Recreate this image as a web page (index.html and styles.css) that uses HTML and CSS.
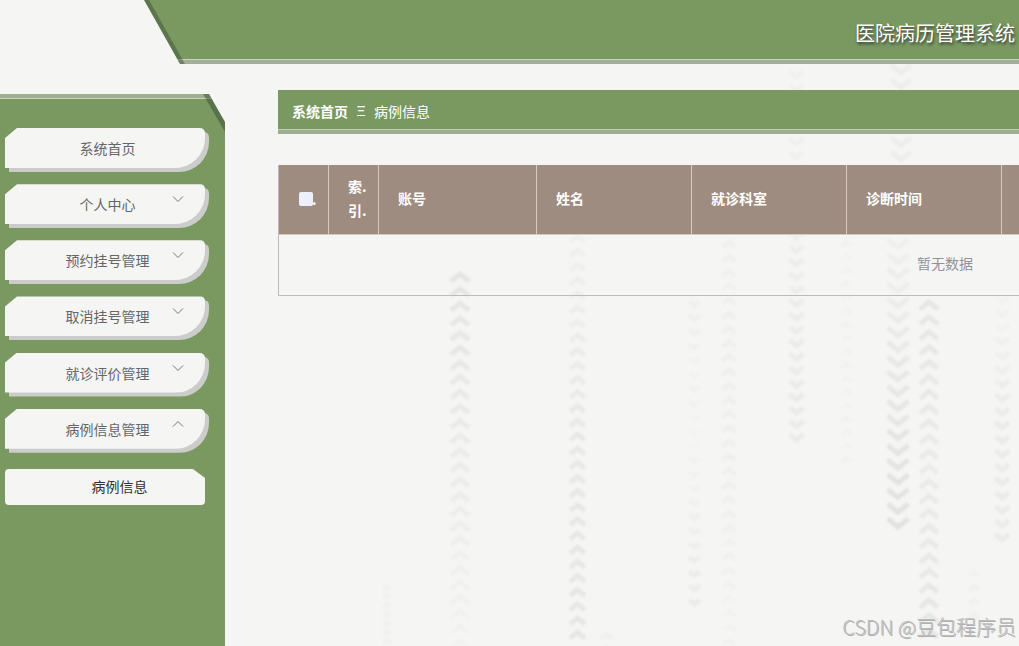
FILE: index.html
```html
<!DOCTYPE html>
<html lang="zh-CN">
<head>
    <meta charset="UTF-8">
    <meta name="viewport" content="width=device-width, initial-scale=1.0">
    <title>医院病历管理系统</title>
    <link rel="stylesheet" href="styles.css">
</head>
<body>
    <svg class="page-bg" id="page-bg" width="1019" height="646" viewBox="0 0 1019 646"></svg>
    <header class="header">
        <h1 class="title">医院病历管理系统</h1>
    </header>
    <div class="container">
        <aside class="sidebar">
            <ul class="menu">
                <li class="menu-item"><a class="menu-link">系统首页</a></li>
                <li class="menu-item"><a class="menu-link">个人中心</a><svg class="arrow" viewBox="0 0 12 8"><path d="M1 1.5l5 5 5-5"/></svg></li>
                <li class="menu-item"><a class="menu-link">预约挂号管理</a><svg class="arrow" viewBox="0 0 12 8"><path d="M1 1.5l5 5 5-5"/></svg></li>
                <li class="menu-item"><a class="menu-link">取消挂号管理</a><svg class="arrow" viewBox="0 0 12 8"><path d="M1 1.5l5 5 5-5"/></svg></li>
                <li class="menu-item"><a class="menu-link">就诊评价管理</a><svg class="arrow" viewBox="0 0 12 8"><path d="M1 1.5l5 5 5-5"/></svg></li>
                <li class="menu-item"><a class="menu-link">病例信息管理</a><svg class="arrow" viewBox="0 0 12 8"><path d="M1 6.5l5-5 5 5"/></svg></li>
            </ul>
            <a class="submenu-link">病例信息</a>
        </aside>
        <main class="main">
            <nav class="breadcrumb">
                <b>系统首页</b>
                <span class="separator">Ξ</span>
                <span>病例信息</span>
            </nav>
            <table class="table">
                <thead>
                    <tr>
                        <th class="col-check"><span class="check-wrap"><span class="checkbox"></span>.</span></th>
                        <th class="col-index">索.<br>引.</th>
                        <th class="col-account">账号</th>
                        <th class="col-info">姓名</th>
                        <th class="col-info">就诊科室</th>
                        <th class="col-info">诊断时间</th>
                        <th></th>
                    </tr>
                </thead>
                <tbody>
                    <tr>
                        <td class="empty" colspan="7">暂无数据</td>
                    </tr>
                </tbody>
            </table>
        </main>
    </div>
    <div class="watermark">CSDN @豆包程序员</div>
    <script>
// x, first y, last y, spacing, width, direction (1 = down), opacity at start / middle / end
const columns = [
  [460, 272, 640, 14.65, 20, -1, 0.065, 0.04, 0.012],
  [577.5, 234, 640, 14.15, 17, -1, 0.02, 0.05, 0.06],
  [694.5, 292, 604, 14.2, 13, 1, 0.025, 0.008, 0.04],
  [729, 240, 640, 14.2, 15, -1, 0.02, 0.025, 0.01],
  [796.5, 64, 440, 13.45, 16, 1, 0.02, 0.03, 0.045],
  [847, 240, 460, 13.5, 13, -1, 0.01, 0.01, 0.01],
  [901, 72, 160, 14.5, 22, 1, 0.03, 0.03, 0.03],
  [898, 238, 527, 14.7, 23, 1, 0.02, 0.055, 0.075],
  [929, 300, 640, 14.9, 20, -1, 0.06, 0.04, 0.06],
  [1002.5, 300, 540, 14, 16, 1, 0.01, 0.04, 0.04],
  [974, 570, 615, 14, 12, -1, 0.012, 0.02, 0.02],
  [387, 584, 644, 9, 11, -1, 0.016, 0.016, 0.016],
  [606, 632, 646, 12, 14, -1, 0.02, 0.02, 0.02]
];

let arrows = '';
columns.forEach(([x, first, last, step, width, dir, a, b, c]) => {
  const w = width / 2 - 1;
  const h = w * 0.8 * dir;
  // columns pointing down are laid out from their lowest arrow
  const count = Math.floor((last - first) / step);
  for (let i = 0; i <= count; i++) {
    const y = dir > 0 ? last - i * step : first + i * step + 2;
    const t = (y - first) / (last - first);
    const opacity = t < 0.5 ? a + (b - a) * t * 2 : b + (c - b) * (t - 0.5) * 2;
    arrows += `<path d="M${x - w} ${y - h}L${x} ${y}L${x + w} ${y - h}" stroke-opacity="${opacity}"/>`;
  }
});
document.getElementById('page-bg').innerHTML = arrows;
    </script>
</body>
</html>
```
FILE: styles.css
```css
* {
  box-sizing: border-box;
}

body {
  margin: 0;
  height: 646px;
  overflow: hidden;
  background: #f5f5f4;
  font-family: "Noto Sans CJK SC", sans-serif;
  font-size: 14px;
  color: #666;
}

/* faint arrows behind the whole page */
.page-bg {
  position: absolute;
  top: 0;
  left: 0;
  z-index: -1;
  fill: none;
  stroke: #000;
  stroke-width: 5;
  filter: blur(1.1px);
}

.header {
  position: relative;
  height: 64px;
  margin-left: 144px;
  padding: 18px 4px 0 0;
  background: #799961;
  border-bottom: 4px solid #a3ae99;
  box-shadow: inset 0 -1px 0 #c9d6bf;
  clip-path: polygon(0 0, 100% 0, 100% 100%, 36px 100%);
}

.header::before {
  content: "";
  position: absolute;
  top: 0;
  left: 0;
  width: 42px;
  height: 64px;
  background: rgba(55, 75, 50, 0.45);
  clip-path: polygon(0 0, 5px 0, 41px 100%, 36px 100%);
}

.title {
  margin: 0;
  font-size: 20px;
  line-height: 30px;
  font-weight: normal;
  text-align: right;
  color: #fff;
  text-shadow: 1px 2px 3px #333;
}

.container {
  display: flex;
  align-items: flex-start;
}

.sidebar {
  position: relative;
  flex: none;
  width: 225px;
  height: 552px;
  margin-top: 30px;
  padding: 30px 20px 0 5px;
  background: #799961;
  border-top: 4px solid #9fb092;
  box-shadow: inset 0 1px 0 #c9d6bf;
  clip-path: polygon(0 0, 209px 0, 100% 28px, 100% 100%, 0 100%);
}

.sidebar::before {
  content: "";
  position: absolute;
  top: -4px;
  right: 0;
  width: 22px;
  height: 38px;
  background: rgba(55, 75, 50, 0.5);
  clip-path: polygon(0 0, 6px 0, 100% 28px, 100% 100%);
}

.menu {
  margin: 0;
  padding: 0;
  list-style: none;
}

.menu-item {
  position: relative;
  width: 204px;
  height: 44px;
  margin-bottom: 12.15px;
}

/* offset grey plate under the button */
.menu-item::before {
  content: "";
  position: absolute;
  top: 4px;
  left: 4px;
  width: 200px;
  height: 40px;
  background: #ccccca;
  border-radius: 0 5px 30px 0;
  clip-path: polygon(12px 0, 100% 0, 100% 100%, 0 100%, 0 10px);
}

.menu-link {
  position: relative;
  display: block;
  width: 200px;
  height: 40px;
  padding-left: 5px;
  line-height: 41px;
  text-align: center;
  background: #f5f5f4;
  border-radius: 0 5px 30px 0;
  clip-path: polygon(12px 0, 100% 0, 100% 100%, 0 100%, 0 10px);
}

.arrow {
  position: absolute;
  top: 11px;
  left: 167px;
  width: 12px;
  height: 8px;
  fill: none;
  stroke: #777;
  stroke-width: 1;
}

.submenu-link {
  display: block;
  width: 200px;
  height: 36px;
  margin-top: 16.25px;
  padding-left: 29px;
  line-height: 35px;
  text-align: center;
  color: #303133;
  background: #f5f5f4;
  border-radius: 4px;
  clip-path: polygon(0 0, 188px 0, 100% 9px, 100% 100%, 0 100%);
}

.main {
  flex: 1;
  min-width: 0;
  padding: 26px 0 0 53px;
  overflow: hidden;
}

.breadcrumb {
  display: flex;
  height: 44px;
  padding-left: 14px;
  line-height: 43px;
  color: #fff;
  background: #799961;
  border-bottom: 4px solid #9dae93;
  box-shadow: inset 0 -1px 0 #c3d0b9;
}

.separator {
  width: 26px;
  text-align: center;
  font-family: "Liberation Sans", sans-serif;
}

.table {
  width: 1334px;
  margin-top: 31px;
  table-layout: fixed;
  border-collapse: separate;
  border-spacing: 0;
  border-left: 1px solid #bdb8b5;
}

.table th {
  height: 70px;
  padding: 0 0 4px 19px;
  line-height: 24px;
  text-align: left;
  color: #fff;
  background: #9f8c80;
  border-right: 1px solid #d5cac2;
  border-bottom: 1px solid #d3c9c1;
}

.col-check,
.col-index {
  width: 50px;
}

.col-account {
  width: 158px;
}

.col-info {
  width: 155px;
}

.check-wrap {
  display: flex;
  align-items: center;
  padding-top: 2px;
}

.checkbox {
  width: 14px;
  height: 14px;
  margin-left: 1px;
  margin-right: -1px;
  background: #edf0fa;
  border-radius: 2px;
}

.empty {
  height: 61px;
  padding: 0 1px 4px 0;
  text-align: center;
  color: #909399;
  border-bottom: 1px solid #bdbbbb;
}

.watermark {
  position: absolute;
  right: 3px;
  bottom: 4px;
  font-size: 20px;
  line-height: 30px;
  font-weight: 300;
  color: #bcbcbc;
  text-shadow: 1px 1px 0 #b0b0b0;
}
```
